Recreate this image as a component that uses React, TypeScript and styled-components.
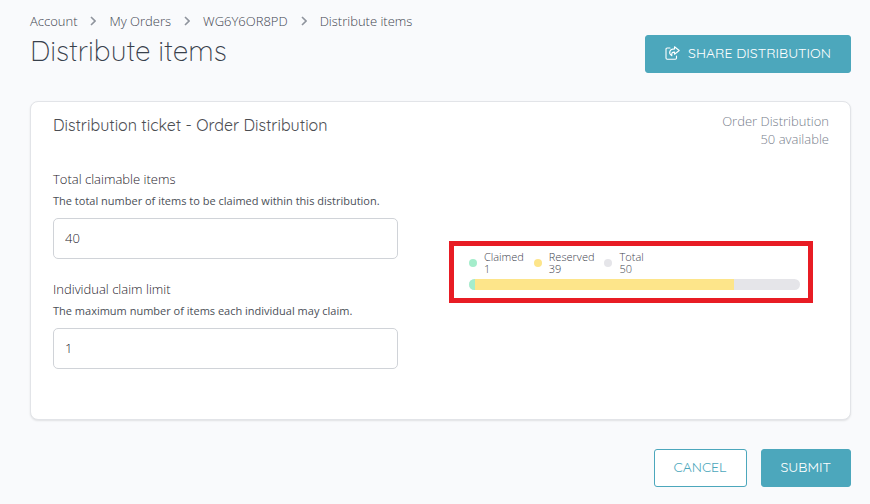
import React from 'react';
import styled, { createGlobalStyle, css } from 'styled-components';

const GlobalStyle = createGlobalStyle`
  *, *::before, *::after { box-sizing: border-box; }
  body {
    margin: 0;
    background: #f9fafc;
    color: #1f242c;
    font-family: 'Open Sans', 'Noto Sans', sans-serif;
    font-size: 13px;
    font-weight: 300;
  }
  h1, h2, p, ol, ul, dl, dd { margin: 0; padding: 0; }
`;

const rounded = css`
  font-family: Quicksand, Lato, sans-serif;
`;

const Page = styled.main`
  padding: 11px 19px 16px 30px;
`;

const Breadcrumbs = styled.ol`
  display: flex;
  align-items: center;
  list-style: none;
  line-height: 20px;
`;

const Crumb = styled.li`
  display: flex;
  align-items: center;
`;

const CrumbLink = styled.a`
  color: #3f4550;
  text-decoration: none;
`;

const Chevron = styled.svg`
  width: 6px;
  height: 10px;
  margin: 0 13px;
`;

const Header = styled.header`
  display: flex;
  justify-content: space-between;
  align-items: flex-start;
`;

const Title = styled.h1`
  ${rounded}
  font-size: 28px;
  line-height: 40px;
  font-weight: 300;
  color: #38404b;
`;

const Button = styled.button<{ $outline?: boolean }>`
  ${rounded}
  display: inline-flex;
  align-items: center;
  gap: 8px;
  height: 38px;
  padding: 0 19px 2px;
  border: 1px solid #4ca7bc;
  border-radius: 3px;
  background: ${p => (p.$outline ? '#fff' : '#4ca7bc')};
  color: ${p => (p.$outline ? '#4ca7bc' : '#fff')};
  font-size: 14px;
  font-weight: 450;
  text-transform: uppercase;
`;

const ShareButton = styled(Button)`
  margin-top: 4px;
`;

const Card = styled.section`
  margin-top: 28px;
  padding: 10px 21px 50px 22px;
  background: #fff;
  border: 1px solid #e2e4e8;
  border-radius: 8px;
  box-shadow: 0 1px 2px rgba(0, 0, 0, 0.1);
`;

const CardHeader = styled.div`
  display: flex;
  justify-content: space-between;
`;

const CardTitle = styled.h2`
  ${rounded}
  font-size: 16px;
  line-height: 26px;
  font-weight: 400;
  color: #4b4d52;
`;

const Availability = styled.p`
  color: #777e8b;
  line-height: 18px;
  text-align: right;
`;

const Columns = styled.div`
  display: grid;
  grid-template-columns: 4fr 5fr;
  align-items: center;
  margin-top: 21px;
`;

const Fields = styled.div`
  display: grid;
  gap: 20px;
`;

const Field = styled.div`
  display: grid;
`;

const Label = styled.label`
  line-height: 20px;
`;

const Hint = styled.p`
  margin: 2px 0 7px;
  font-size: 11px;
  font-weight: 400;
  line-height: 20px;
  color: #4b5058;
`;

const Input = styled.input`
  width: 100%;
  height: 41px;
  padding: 0 11px 2px;
  border: 1px solid #d0d3d8;
  border-radius: 5px;
  background: #fff;
  color: #1f242c;
  font: inherit;
`;

const Summary = styled.div`
  margin: 6px 16px 0 51px;
  padding: 5px 8px 8px 15px;
  border: 5px solid #e81c24;
`;

const Legend = styled.dl`
  display: flex;
  gap: 10px;
  font-size: 11px;
  line-height: 12px;
  color: #3f4550;
`;

const LegendItem = styled.div`
  display: grid;
  grid-template-columns: 8px auto;
  column-gap: 7px;
  align-items: center;
`;

const Dot = styled.span<{ $color: string }>`
  grid-row: span 2;
  width: 8px;
  height: 8px;
  border-radius: 50%;
  background: ${p => p.$color};
`;

const Value = styled.dd`
  grid-column: 2;
`;

const Bar = styled.div`
  display: flex;
  height: 11px;
  margin-top: 4px;
  border-radius: 6px;
  overflow: hidden;
  background: #e5e5e9;
`;

const Segment = styled.div<{ $color: string }>`
  background: ${p => p.$color};
`;

const Actions = styled.div`
  display: flex;
  justify-content: flex-end;
  gap: 14px;
  margin-top: 29px;
`;

const crumbs = ['Account', 'My Orders', 'WG6Y6OR8PD', 'Distribute items'];

const total = 50;
const stats = [
  { label: 'Claimed', value: 1, color: '#a4edcb' },
  { label: 'Reserved', value: 39, color: '#fde58a' },
  { label: 'Total', value: total, color: '#e5e5e9' },
];

const fields = [
  {
    id: 'total-claimable',
    label: 'Total claimable items',
    hint: 'The total number of items to be claimed within this distribution.',
    value: '40',
  },
  {
    id: 'claim-limit',
    label: 'Individual claim limit',
    hint: 'The maximum number of items each individual may claim.',
    value: '1',
  },
];

const ShareIcon = () => (
  <svg width="15" height="14" viewBox="0 0 15 14" fill="none" stroke="currentColor" strokeWidth="1.1" strokeLinejoin="round" strokeLinecap="round" aria-hidden="true">
    <path d="M5 2H2.2Q1 2 1 3.2V12Q1 13.2 2.2 13.2H10.3Q11.5 13.2 11.5 12V10" />
    <path d="M9.5 .8L14.2 4.5L9.5 8.2V6.1C7.5 6 6.5 6.6 6.8 9.8C3.2 7.5 4.3 3 9.5 2.9Z" />
  </svg>
);

export default function App() {
  return (
    <>
      <GlobalStyle />
      <Page>
        <nav aria-label="Breadcrumb">
          <Breadcrumbs>
            {crumbs.map((name, i) => (
              <Crumb key={name}>
                {i > 0 && (
                  <Chevron viewBox="0 0 6 10" fill="none" stroke="#8f949d" strokeWidth="1.6" aria-hidden="true">
                    <path d="M1 1L5 5L1 9" />
                  </Chevron>
                )}
                <CrumbLink href="#">{name}</CrumbLink>
              </Crumb>
            ))}
          </Breadcrumbs>
        </nav>
        <Header>
          <Title>Distribute items</Title>
          <ShareButton type="button">
            <ShareIcon />
            Share distribution
          </ShareButton>
        </Header>
        <Card>
          <CardHeader>
            <CardTitle>Distribution ticket - Order Distribution</CardTitle>
            <Availability>
              Order Distribution
              <br />
              50 available
            </Availability>
          </CardHeader>
          <Columns>
            <Fields>
              {fields.map(f => (
                <Field key={f.id}>
                  <Label htmlFor={f.id}>{f.label}</Label>
                  <Hint id={`${f.id}-hint`}>{f.hint}</Hint>
                  <Input id={f.id} type="text" inputMode="numeric" defaultValue={f.value} aria-describedby={`${f.id}-hint`} />
                </Field>
              ))}
            </Fields>
            <Summary>
              <Legend>
                {stats.map(s => (
                  <LegendItem key={s.label}>
                    <Dot $color={s.color} />
                    <dt>{s.label}</dt>
                    <Value>{s.value}</Value>
                  </LegendItem>
                ))}
              </Legend>
              <Bar>
                {stats.slice(0, 2).map(s => (
                  <Segment key={s.label} $color={s.color} style={{ width: `${(s.value / total) * 100}%` }} />
                ))}
              </Bar>
            </Summary>
          </Columns>
        </Card>
        <Actions>
          <Button type="button" $outline>Cancel</Button>
          <Button type="submit">Submit</Button>
        </Actions>
      </Page>
    </>
  );
}
